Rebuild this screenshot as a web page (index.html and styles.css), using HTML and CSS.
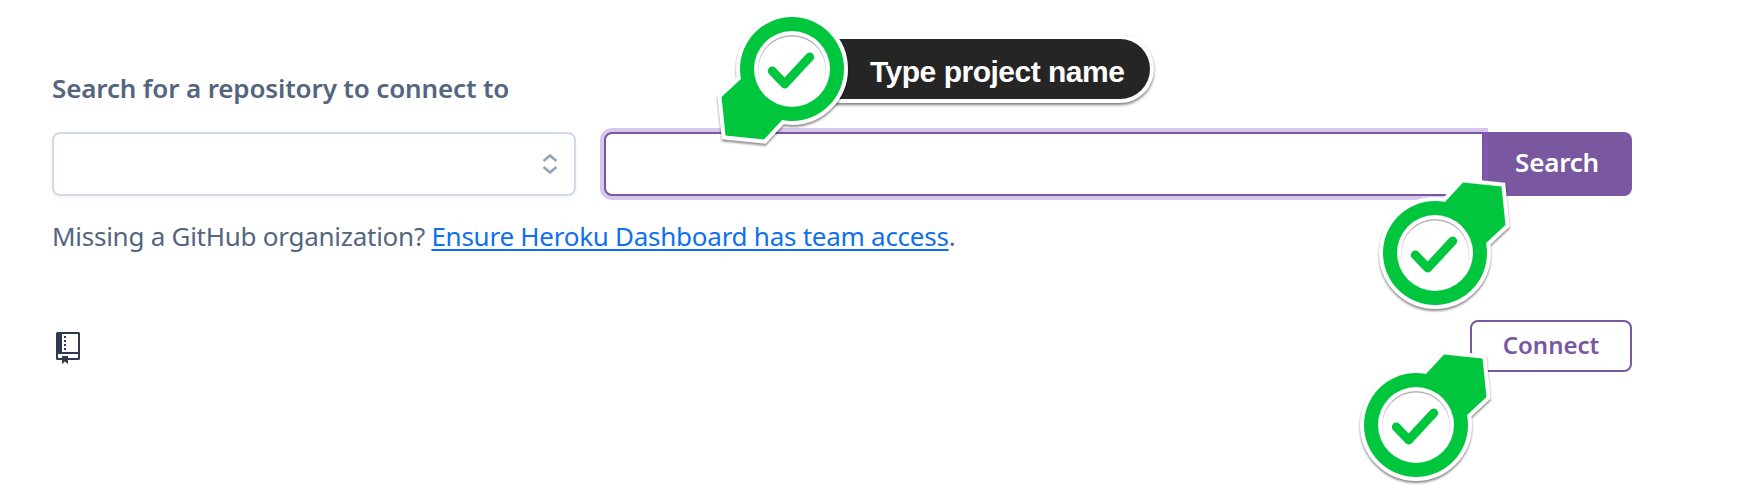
FILE: index.html
```
<!DOCTYPE html>
<html lang="en">
<head>
<meta charset="utf-8">
<title>Connect repository</title>
<link rel="stylesheet" href="styles.css">
</head>
<body>
<svg class="defs" width="0" height="0">
  <defs>
    <g id="pointer">
      <path d="M-50 9L-70.5 28L-66.5 66.5L-28 70.5L-9 50Z"/>
      <circle r="52"/>
    </g>
    <g id="disc">
      <circle r="38" fill="#fff"/>
      <circle class="disc-shade" r="34"/>
      <circle class="disc-face" r="33.8" cy="1.2"/>
      <path class="tick" d="M-19.7 2L-7.3 15L17.7 -12"/>
    </g>
  </defs>
</svg>
<main class="panel">
  <label class="title" for="repo"><span class="title-text">Search for a repository to connect to</span></label>
  <div class="row">
    <div class="select">
      <svg width="16" height="22" viewBox="0 0 16 22"><path d="M1.5 8L8 2.5L14.5 8M1.5 14L8 19.5L14.5 14"/></svg>
    </div>
    <div class="group">
      <input class="input" id="repo" type="text">
      <button class="search"><span>Search</span></button>
    </div>
  </div>
  <p class="hint">Missing a GitHub organization? <a class="link" href="#">Ensure Heroku Dashboard has team access</a>.</p>
  <div class="result">
    <svg class="repo" width="24" height="32" viewBox="0 0 24 32">
      <path fill="#2f3b4c" fill-rule="evenodd" d="M1.5 0H22.5Q24 0 24 1.5V26.5Q24 28 22.5 28H12V32L9 29.5L6 32V28H1.5Q0 28 0 26.5V1.5Q0 0 1.5 0ZM6 2V20H22V2ZM2 22V26H6V24H12V26H22V22Z"/>
      <path fill="#2f3b4c" d="M8 4h2v2H8zM8 8h2v2H8zM8 12h2v2H8zM8 16h2v2H8z"/>
    </svg>
    <button class="connect"><span>Connect</span></button>
  </div>
</main>
<div class="callout"><span>Type project name</span></div>
<svg class="marker marker-name" width="180" height="180" viewBox="-90 -90 180 180">
  <use class="outline" href="#pointer"/><use class="fill" href="#pointer"/><use href="#disc"/>
</svg>
<svg class="marker marker-search" width="180" height="180" viewBox="-90 -90 180 180">
  <use class="outline" href="#pointer" transform="rotate(180)"/><use class="fill" href="#pointer" transform="rotate(180)"/><use href="#disc"/>
</svg>
<svg class="marker marker-connect" width="180" height="180" viewBox="-90 -90 180 180">
  <use class="outline" href="#pointer" transform="rotate(180)"/><use class="fill" href="#pointer" transform="rotate(180)"/><use href="#disc"/>
</svg>
</body>
</html>
```
FILE: styles.css
```
* { box-sizing: border-box; }
body {
  margin: 0;
  position: relative;
  width: 1742px;
  height: 498px;
  overflow: hidden;
  background: #fff;
  color: #54657f;
  font-family: "Noto Sans", "Open Sans", sans-serif;
  font-size: 26px;
}
.defs { position: absolute; }
.panel { padding: 70px 110px 0 52px; }
.title { display: block; height: 36px; line-height: 36px; font-weight: 600; letter-spacing: -0.15px; white-space: nowrap; }
.row { display: flex; gap: 28px; margin-top: 26px; }
.select {
  width: 524px;
  height: 64px;
  border: 2px solid #cfd9e7;
  border-radius: 8px;
  padding-right: 16px;
  display: flex;
  align-items: center;
  justify-content: flex-end;
  box-shadow: 0 3px 5px rgba(0, 0, 0, .04);
}
.select path { fill: none; stroke: #97a3b9; stroke-width: 2.6; }
.group { display: flex; flex: 1; }
.input {
  width: 880px;
  height: 64px;
  border: 2px solid #79589f;
  border-radius: 8px 0 0 8px;
  outline: none;
  background: #fff;
  box-shadow: 0 0 0 4px rgba(144, 94, 200, .35);
  z-index: 1;
}
.search {
  flex: 1;
  height: 64px;
  border: 0;
  border-radius: 0 8px 8px 0;
  background: #79589f;
  color: #fff;
  font: 600 26px/60px "Noto Sans", sans-serif;
  letter-spacing: -0.2px;
  padding: 0 2px 4px 0;
}
.hint { margin: 22px 0 0; height: 36px; line-height: 36px; letter-spacing: -0.26px; white-space: nowrap; }
.link { color: #0f6ff0; text-decoration-thickness: 2px; text-underline-offset: 3px; text-decoration-skip-ink: none; }
.result { display: flex; justify-content: space-between; margin-top: 66px; }
.repo { margin: 12px 0 0 4px; }
.connect {
  width: 162px;
  height: 52px;
  border: 2px solid #79589f;
  border-radius: 8px;
  background: #fff;
  color: #79589f;
  font: 600 24px/46px "Noto Sans", sans-serif;
  padding: 0 0 2px;
}
.callout {
  position: absolute;
  z-index: 2;
  left: 800px;
  top: 39px;
  width: 350px;
  height: 60px;
  padding-left: 70px;
  border-radius: 0 30px 30px 0;
  background: #252525;
  color: #fff;
  font: bold 30px/65px "Liberation Sans", Arial, sans-serif;
  letter-spacing: -0.5px;
  white-space: nowrap;
  box-shadow: 0 0 0 4px #fff, 0 2px 3px 4px rgba(0, 0, 0, .5);
}
.marker { position: absolute; z-index: 3; overflow: visible; filter: drop-shadow(0 2px 1.3px rgba(0, 0, 0, .45)); }
.outline { fill: #fff; stroke: #fff; stroke-width: 8px; stroke-linejoin: miter; }
.fill { fill: #00c63d; }
.disc-shade { fill: #b5b5b5; }
.disc-face { fill: #fff; }
.tick { fill: none; stroke: #00c63d; stroke-width: 9px; stroke-linecap: round; stroke-linejoin: round; }
.marker-name { left: 702px; top: -21px; }
.marker-search { left: 1345px; top: 163px; }
.marker-connect { left: 1326px; top: 335px; }
```
